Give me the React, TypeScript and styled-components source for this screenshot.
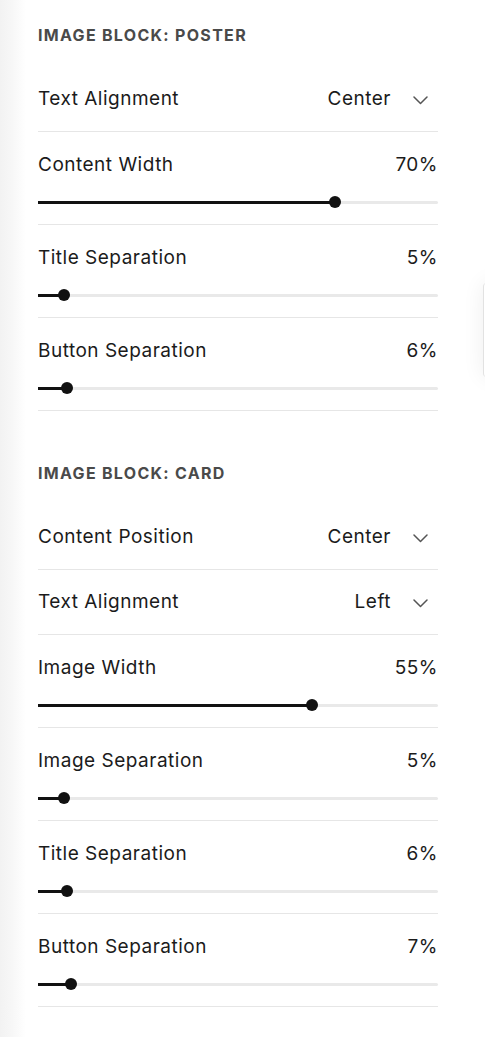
import styled, { createGlobalStyle } from 'styled-components'

type SelectField = { kind: 'select'; label: string; value: string }
type SliderField = { kind: 'slider'; label: string; value: string; fill: number }
type Field = SelectField | SliderField

type Section = { title: string; fields: Field[] }

const sections: Section[] = [
  {
    title: 'Image Block: Poster',
    fields: [
      { kind: 'select', label: 'Text Alignment', value: 'Center' },
      { kind: 'slider', label: 'Content Width', value: '70%', fill: 0.7425 },
      { kind: 'slider', label: 'Title Separation', value: '5%', fill: 0.064 },
      { kind: 'slider', label: 'Button Separation', value: '6%', fill: 0.0725 },
    ],
  },
  {
    title: 'Image Block: Card',
    fields: [
      { kind: 'select', label: 'Content Position', value: 'Center' },
      { kind: 'select', label: 'Text Alignment', value: 'Left' },
      { kind: 'slider', label: 'Image Width', value: '55%', fill: 0.685 },
      { kind: 'slider', label: 'Image Separation', value: '5%', fill: 0.065 },
      { kind: 'slider', label: 'Title Separation', value: '6%', fill: 0.0725 },
      { kind: 'slider', label: 'Button Separation', value: '7%', fill: 0.0825 },
    ],
  },
]

const GlobalStyle = createGlobalStyle`
  html, body {
    margin: 0;
    padding: 0;
  }
  body {
    background: linear-gradient(to right, #f2f2f2 0, #f7f7f7 12px, #ffffff 26px);
    font-family: Inter, "Liberation Sans", Arial, sans-serif;
    color: #1b1b1b;
    -webkit-font-smoothing: antialiased;
    overflow: hidden;
  }
`

const Chevron = () => (
  <svg width="15" height="9" viewBox="0 0 15 9" fill="none">
    <polyline points="1,1 7.5,7.5 14,1" stroke="#555" strokeWidth="1.5" strokeLinecap="round" strokeLinejoin="round" />
  </svg>
)

export default function App() {
  return (
    <>
      <GlobalStyle />
      <Panel>
        {sections.map((s) => (
          <Group key={s.title}>
            <GroupTitle>{s.title}</GroupTitle>
            {s.fields.map((f) =>
              f.kind === 'select' ? (
                <SelectRow key={f.label}>
                  <Label>{f.label}</Label>
                  <SelectValue>
                    {f.value}
                    <ChevronBox>
                      <Chevron />
                    </ChevronBox>
                  </SelectValue>
                </SelectRow>
              ) : (
                <SliderRow key={f.label}>
                  <SliderHead>
                    <Label>{f.label}</Label>
                    <Value>{f.value}</Value>
                  </SliderHead>
                  <Track>
                    <Fill style={{ width: `${f.fill * 100}%` }} />
                    <Thumb style={{ left: `${f.fill * 100}%` }} />
                  </Track>
                </SliderRow>
              )
            )}
          </Group>
        ))}
      </Panel>
      <EdgeTab />
    </>
  )
}

// Styles
const Panel = styled.div`
  width: 400px;
  padding: 24px 0 0 38px;
`

const Group = styled.section`
  & + & {
    margin-top: 51px;
  }
`

const GroupTitle = styled.h2`
  margin: 0 0 21px;
  font-size: 16px;
  line-height: 22px;
  font-weight: 700;
  letter-spacing: 1.3px;
  text-transform: uppercase;
  color: #4a4a4a;
`

const Label = styled.span`
  font-size: 19px;
  line-height: 22px;
  font-weight: 400;
  letter-spacing: 0.5px;
  color: #1b1b1b;
`

const Value = styled.span`
  font-size: 19px;
  line-height: 22px;
  letter-spacing: 0.5px;
  color: #1b1b1b;
`

const SelectRow = styled.div`
  display: flex;
  align-items: center;
  justify-content: space-between;
  height: 64px;
  border-bottom: 1px solid #e6e6e6;
`

const SelectValue = styled(Value)`
  display: flex;
  align-items: center;
  gap: 22px;
  padding-right: 10px;
`

const ChevronBox = styled.span`
  display: flex;
  align-items: center;
  margin-top: 2px;
`

const SliderRow = styled.div`
  padding: 22px 0 16px;
  border-bottom: 1px solid #e6e6e6;
`

const SliderHead = styled.div`
  display: flex;
  justify-content: space-between;
  align-items: center;
  margin-bottom: 20px;
`

const Track = styled.div`
  position: relative;
  height: 12px;
  &::before {
    content: '';
    position: absolute;
    left: 0;
    right: 0;
    top: 5px;
    height: 3px;
    background: #e9e9e9;
    border-radius: 2px;
  }
`

const Fill = styled.div`
  position: absolute;
  left: 0;
  top: 5px;
  height: 3px;
  background: #111;
`

const Thumb = styled.div`
  position: absolute;
  top: 0;
  width: 12px;
  height: 12px;
  margin-left: -6px;
  border-radius: 50%;
  background: #111;
`

const EdgeTab = styled.div`
  position: absolute;
  left: 483px;
  top: 283px;
  width: 30px;
  height: 94px;
  background: #fff;
  border-left: 1px solid #e2e2e2;
  border-radius: 4px 0 0 4px;
  box-shadow: 0 0 22px rgba(0, 0, 0, 0.07);
`
